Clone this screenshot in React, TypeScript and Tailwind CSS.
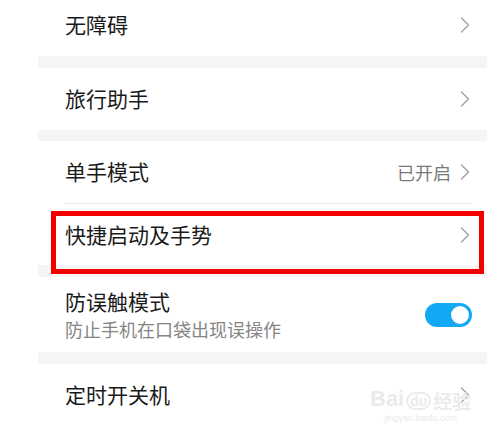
import React from "react";

const Chevron = () => (
  <svg width="10" height="16" viewBox="0 0 10 16" className="shrink-0">
    <path d="M1.5 1 L8.5 8 L1.5 15" fill="none" stroke="#a0a0a0" strokeWidth="1.3" strokeLinecap="round" strokeLinejoin="round" />
  </svg>
);

export default function App() {
  return (
    <div
      className="relative w-[487px] h-[445px] overflow-hidden bg-white"
      style={{ fontFamily: '"Noto Sans CJK SC", "Noto Sans", sans-serif' }}
    >
      <div className="ml-[38px] flex flex-col">
        <div className="h-[56px] flex items-center justify-between pl-[27px] pr-[17px] pb-[6px]">
          <span className="text-[21px] text-[#1a1a1a]">无障碍</span>
          <Chevron />
        </div>
        <div className="h-[12px] bg-[#f5f5f5]" />
        <div className="h-[62px] flex items-center justify-between pl-[27px] pr-[17px]">
          <span className="text-[21px] text-[#1a1a1a]">旅行助手</span>
          <Chevron />
        </div>
        <div className="h-[11px] bg-[#f5f5f5]" />
        <div className="h-[62px] flex items-center justify-between pl-[27px] pr-[17px]">
          <span className="text-[21px] text-[#1a1a1a]">单手模式</span>
          <div className="flex items-center gap-[9px]">
            <span className="text-[18px] text-[#7a7a7a]">已开启</span>
            <Chevron />
          </div>
        </div>
        <div className="ml-[27px] mr-[14px] h-px bg-[#ebebeb]" />
        <div className="h-[61px] flex items-center justify-between pl-[27px] pr-[17px]">
          <span className="text-[21px] text-[#1a1a1a]">快捷启动及手势</span>
          <Chevron />
        </div>
        <div className="h-[12px] bg-[#f5f5f5]" />
        <div className="h-[75px] flex items-center justify-between pl-[27px] pr-[15px]">
          <div className="flex flex-col">
            <span className="text-[21px] leading-[28px] text-[#1a1a1a]">防误触模式</span>
            <span className="text-[18px] leading-[28px] text-[#858585]">防止手机在口袋出现误操作</span>
          </div>
          <div className="w-[47px] h-[24px] rounded-full bg-[#12a8f4] flex items-center justify-end pr-[1px]">
            <div className="w-[22px] h-[22px] rounded-full bg-white border-[2px] border-[#12a8f4]" />
          </div>
        </div>
        <div className="h-[12px] bg-[#f5f5f5]" />
        <div className="h-[62px] flex items-center justify-between pl-[27px] pr-[17px]">
          <span className="text-[21px] text-[#1a1a1a]">定时开关机</span>
          <Chevron />
        </div>
      </div>

      <div className="absolute left-[51px] top-[211px] w-[433px] h-[63px] border-[5px] border-[#f20000]" />

      <div className="absolute left-[370px] top-[388px] flex flex-col items-center text-[#ebebeb]" style={{ fontFamily: '"Liberation Sans", sans-serif' }}>
        <div className="flex items-end gap-[2px] leading-none">
          <span className="text-[22px] font-bold">Bai</span>
          <span className="text-[14px] font-bold border-2 border-[#ebebeb] rounded-full px-[2px]">du</span>
          <span className="text-[19px] font-bold" style={{ fontFamily: '"Noto Sans CJK SC", sans-serif' }}>经验</span>
        </div>
        <span className="text-[9px] leading-none mt-[4px]">jingyan.baidu.com</span>
      </div>
    </div>
  );
}
